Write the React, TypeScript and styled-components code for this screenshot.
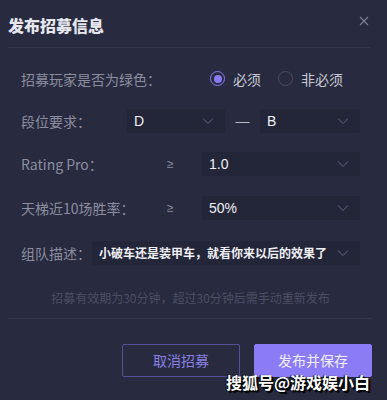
import React from 'react';
import styled, { createGlobalStyle } from 'styled-components';

const GlobalStyle = createGlobalStyle`
  body {
    margin: 0;
    background: #282a3f;
    font-family: "Noto Sans CJK SC", "Noto Sans", sans-serif;
  }
`;

const Chevron = () => (
  <svg width="12" height="8" viewBox="0 0 12 8" fill="none">
    <path d="M1 1.5l5 5 5-5" stroke="#4a4d66" strokeWidth="1.2" />
  </svg>
);

const CloseIcon = () => (
  <svg width="10" height="10" viewBox="0 0 10 10" fill="none">
    <path d="M1 1l8 8M9 1l-8 8" stroke="#7d8094" strokeWidth="1.1" />
  </svg>
);

const App = () => {
  return (
    <Dialog>
      <GlobalStyle />
      <Header>
        <Title>发布招募信息</Title>
        <Close>
          <CloseIcon />
        </Close>
      </Header>
      <Form>
        <Row gap={17}>
          <Label width={189}>招募玩家是否为绿色：</Label>
          <Radio>
            <Dot checked />
            必须
          </Radio>
          <Radio>
            <Dot />
            非必须
          </Radio>
        </Row>
        <Row>
          <Label width={106}>段位要求：</Label>
          <Select width={98}>
            <Value>D</Value>
            <Chevron />
          </Select>
          <Dash>—</Dash>
          <Select width={100}>
            <Value>B</Value>
            <Chevron />
          </Select>
        </Row>
        <Row>
          <Label width={142}>Rating Pro：</Label>
          <Ge>≥</Ge>
          <Select width={158}>
            <Value>1.0</Value>
            <Chevron />
          </Select>
        </Row>
        <Row gap={20}>
          <Label width={142}>天梯近10场胜率：</Label>
          <Ge>≥</Ge>
          <Select width={158}>
            <Value>50%</Value>
            <Chevron />
          </Select>
        </Row>
        <Row>
          <Label width={71}>组队描述：</Label>
          <Select width={268}>
            <Value small>小破车还是装甲车，就看你来以后的效果了</Value>
            <Chevron />
          </Select>
        </Row>
        <Hint>招募有效期为30分钟，超过30分钟后需手动重新发布</Hint>
      </Form>
      <Footer>
        <Button>取消招募</Button>
        <Button primary>发布并保存</Button>
      </Footer>
      <Watermark>搜狐号@游戏娱小白</Watermark>
    </Dialog>
  );
};

export default App;

const Dialog = styled.div`
  position: relative;
  width: 387px;
  height: 400px;
  background: #282a3f;
  overflow: hidden;
`;
const Header = styled.div`
  margin: 0 17px 0 8px;
  height: 47px;
  display: flex;
  align-items: center;
  justify-content: space-between;
  border-bottom: 1px solid #34364c;
`;
const Title = styled.div`
  color: #e6e6ee;
  font-size: 16px;
  font-weight: 900;
  margin-top: 2px;
`;
const Close = styled.div`
  display: flex;
  margin-top: -6px;
  margin-right: 1px;
`;
const Form = styled.div`
  padding: 18px 27px 0 21px;
  display: flex;
  flex-direction: column;
`;
const Row = styled.div<{ gap?: number }>`
  display: flex;
  align-items: center;
  height: 25px;
  margin-bottom: ${(p) => p.gap ?? 18.5}px;
`;
const Label = styled.div<{ width: number }>`
  width: ${(p) => p.width}px;
  flex-shrink: 0;
  color: #8c8ea0;
  font-size: 14px;
  white-space: nowrap;
`;
const Radio = styled.div`
  display: flex;
  align-items: center;
  color: #c9cad4;
  font-size: 14px;
  margin-right: 17px;
`;
const Dot = styled.span<{ checked?: boolean }>`
  width: 15px;
  height: 15px;
  box-sizing: border-box;
  border-radius: 50%;
  border: 1px solid ${(p) => (p.checked ? '#8b7cf6' : '#4a4c62')};
  margin-right: 8px;
  display: flex;
  align-items: center;
  justify-content: center;
  &::after {
    content: '';
    width: 8px;
    height: 8px;
    border-radius: 50%;
    background: ${(p) => (p.checked ? '#8b7cf6' : 'transparent')};
  }
`;
const Select = styled.div<{ width: number }>`
  width: ${(p) => p.width}px;
  height: 24px;
  box-sizing: border-box;
  background: #232538;
  border-radius: 2px;
  display: flex;
  align-items: center;
  justify-content: space-between;
  padding: 0 11px 0 7px;
`;
const Value = styled.span<{ small?: boolean }>`
  color: #f0f0f5;
  font-size: ${(p) => (p.small ? '12px' : '14px')};
  font-weight: ${(p) => (p.small ? 700 : 500)};
  font-family: "Liberation Sans", "Noto Sans CJK SC", sans-serif;
`;
const Dash = styled.div`
  width: 35px;
  text-align: center;
  color: #b8b9c6;
  font-size: 14px;
  font-family: "Liberation Sans", sans-serif;
`;
const Ge = styled.div`
  width: 39px;
  color: #8c8ea0;
  font-size: 12px;
  font-family: "Liberation Sans", sans-serif;
  padding-left: 4px;
  box-sizing: border-box;
`;
const Hint = styled.div`
  text-align: center;
  color: #4c4e63;
  font-size: 12px;
  margin-top: 5px;
`;
const Footer = styled.div`
  margin: 12px 15px 0 8px;
  border-top: 1px solid #34364c;
  display: flex;
  justify-content: flex-end;
  gap: 14px;
  padding-top: 25px;
`;
const Button = styled.div<{ primary?: boolean }>`
  width: 118px;
  height: 33px;
  box-sizing: border-box;
  border-radius: 2px;
  display: flex;
  align-items: center;
  justify-content: center;
  font-size: 14px;
  color: ${(p) => (p.primary ? '#f2f0ff' : '#8a80e6')};
  background: ${(p) => (p.primary ? '#8b7cf6' : 'transparent')};
  border: 1px solid ${(p) => (p.primary ? '#8b7cf6' : '#554f9a')};
`;
const Watermark = styled.div`
  position: absolute;
  right: 17px;
  top: 370px;
  color: #ffffff;
  font-size: 16px;
  font-weight: 700;
  text-shadow: 1px 1px 0 #000, 2px 2px 1px #000, -1px 0 1px #000;
`;
